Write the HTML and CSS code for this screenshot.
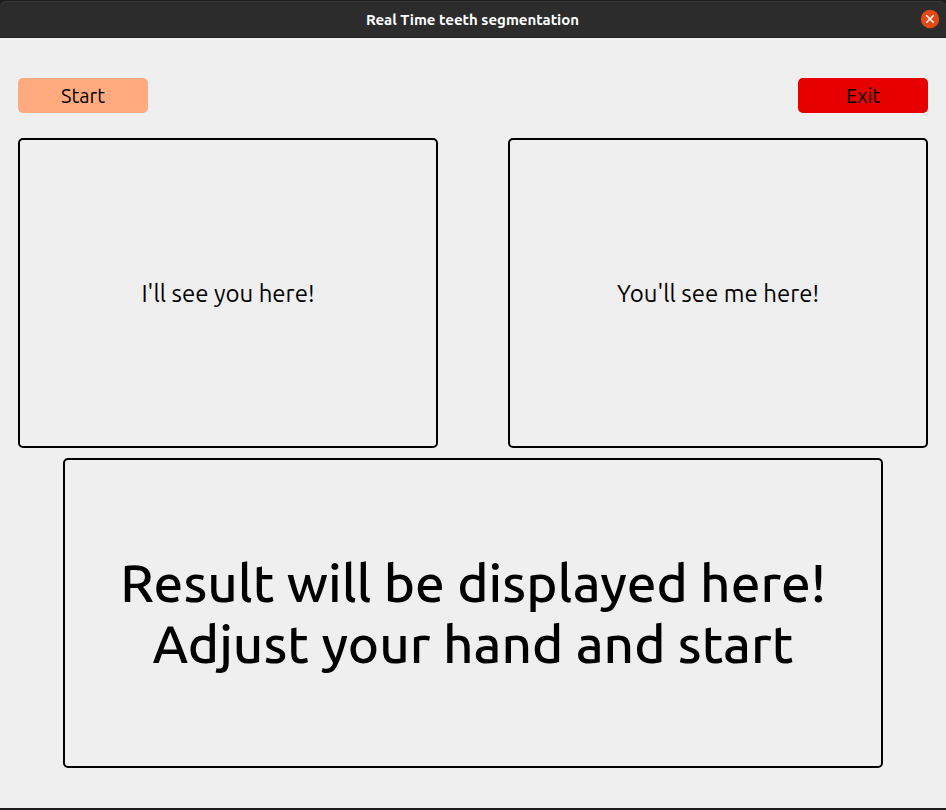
FILE: index.html
```html
<!DOCTYPE html>
<html lang="en">
<head>
  <meta charset="utf-8">
  <meta name="viewport" content="width=device-width, initial-scale=1">
  <title>Real Time teeth segmentation</title>
  <link rel="stylesheet" href="styles.css">
</head>
<body>
  <div class="window">
    <header class="titlebar">
      <h1 class="title">Real Time teeth segmentation</h1>
      <button class="close" type="button" aria-label="Close">
        <svg viewBox="0 0 20 20" width="20" height="20" aria-hidden="true">
          <circle cx="10" cy="10" r="9.2" fill="#e24a18"/>
          <path d="M6.3 6.3 13.7 13.7M13.7 6.3 6.3 13.7" stroke="#fff" stroke-width="1.5" fill="none"/>
        </svg>
      </button>
    </header>
    <main class="content">
      <div class="actions">
        <button class="button start" type="button">Start</button>
        <button class="button exit" type="button">Exit</button>
      </div>
      <div class="views">
        <section class="panel">I'll see you here!</section>
        <section class="panel">You'll see me here!</section>
      </div>
      <section class="panel result">Result will be displayed here!<br>Adjust your hand and start</section>
    </main>
  </div>
</body>
</html>
```
FILE: styles.css
```css
* {
  box-sizing: border-box;
}

body {
  margin: 0;
  background: #1c1c1c;
  color: #000;
  font-family: Ubuntu, "Noto Sans", sans-serif;
}

.window {
  display: flex;
  flex-direction: column;
  min-height: 100vh;
  border-bottom: 2px solid #1c1c1c;
}

.titlebar {
  display: grid;
  grid-template-columns: 1fr auto 1fr;
  align-items: center;
  height: 38px;
  padding: 0 6px 0 5px;
  background: #2c2c2c;
  border-top: 1px solid #1c1c1c;
  border-bottom: 1px solid #262626;
  border-radius: 6px 6px 0 0;
  box-shadow: inset 0 1px #383838;
}

.title {
  grid-column: 2;
  margin: 0;
  padding-top: 2px;
  color: #fff;
  font-size: 15px;
  line-height: 20px;
}

.close {
  justify-self: end;
  width: 20px;
  height: 20px;
  padding: 0;
  border: 0;
  background: none;
}

.close svg {
  display: block;
}

.content {
  display: flex;
  flex: 1;
  flex-direction: column;
  padding: 40px 18px;
  background: #efefef;
}

.actions {
  display: flex;
  justify-content: space-between;
  margin-bottom: 25px;
}

.button {
  width: 130px;
  height: 35px;
  padding: 0;
  border: 0;
  border-radius: 5px;
  color: #000;
  font-family: inherit;
  font-size: 20px;
  line-height: 28px;
}

.start {
  background: #ffaa7f;
}

.exit {
  background: #e60000;
}

.views {
  display: grid;
  grid-template-columns: 1fr 1fr;
  gap: 70px;
  margin-bottom: 10px;
}

.panel {
  display: flex;
  align-items: center;
  justify-content: center;
  min-height: 310px;
  border: 2px solid #000;
  border-radius: 5px;
  font-size: 24px;
  line-height: 29px;
  text-align: center;
}

.result {
  margin: 0 45px;
  font-size: 53px;
  font-weight: 500;
  line-height: 61px;
}
```
